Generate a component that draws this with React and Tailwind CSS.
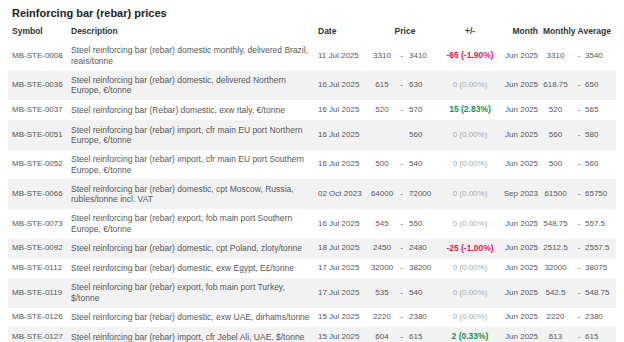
import React from 'react';

const rows = [
  { sym: 'MB-STE-0008', desc: ['Steel reinforcing bar (rebar) domestic monthly, delivered Brazil,', 'reais/tonne'], date: '11 Jul 2025', lo: '3310', hi: '3410', chg: '-65 (-1.90%)', dir: 'down', month: 'Jun 2025', alo: '3310', ahi: '3540' },
  { sym: 'MB-STE-0036', desc: ['Steel reinforcing bar (rebar) domestic, delivered Northern', 'Europe, €/tonne'], date: '16 Jul 2025', lo: '615', hi: '630', chg: '0 (0.00%)', month: 'Jun 2025', alo: '618.75', ahi: '650' },
  { sym: 'MB-STE-0037', desc: ['Steel reinforcing bar (Rebar) domestic, exw Italy, €/tonne'], date: '16 Jul 2025', lo: '520', hi: '570', chg: '15 (2.83%)', dir: 'up', month: 'Jun 2025', alo: '520', ahi: '565' },
  { sym: 'MB-STE-0051', desc: ['Steel reinforcing bar (rebar) import, cfr main EU port Northern', 'Europe, €/tonne'], date: '16 Jul 2025', lo: '', hi: '560', chg: '0 (0.00%)', month: 'Jun 2025', alo: '560', ahi: '580' },
  { sym: 'MB-STE-0052', desc: ['Steel reinforcing bar (rebar) import, cfr main EU port Southern', 'Europe, €/tonne'], date: '16 Jul 2025', lo: '500', hi: '540', chg: '0 (0.00%)', month: 'Jun 2025', alo: '500', ahi: '560' },
  { sym: 'MB-STE-0066', desc: ['Steel reinforcing bar (rebar) domestic, cpt Moscow, Russia,', 'rubles/tonne incl. VAT'], date: '02 Oct 2023', lo: '64000', hi: '72000', chg: '0 (0.00%)', month: 'Sep 2023', alo: '61500', ahi: '65750' },
  { sym: 'MB-STE-0073', desc: ['Steel reinforcing bar (rebar) export, fob main port Southern', 'Europe, €/tonne'], date: '16 Jul 2025', lo: '545', hi: '550', chg: '0 (0.00%)', month: 'Jun 2025', alo: '548.75', ahi: '557.5' },
  { sym: 'MB-STE-0092', desc: ['Steel reinforcing bar (rebar) domestic, cpt Poland, zloty/tonne'], date: '18 Jul 2025', lo: '2450', hi: '2480', chg: '-25 (-1.00%)', dir: 'down', month: 'Jun 2025', alo: '2512.5', ahi: '2557.5' },
  { sym: 'MB-STE-0112', desc: ['Steel reinforcing bar (rebar) domestic, exw Egypt, E£/tonne'], date: '17 Jul 2025', lo: '32000', hi: '38200', chg: '0 (0.00%)', month: 'Jun 2025', alo: '32000', ahi: '38075' },
  { sym: 'MB-STE-0119', desc: ['Steel reinforcing bar (rebar) export, fob main port Turkey,', '$/tonne'], date: '17 Jul 2025', lo: '535', hi: '540', chg: '0 (0.00%)', month: 'Jun 2025', alo: '542.5', ahi: '548.75' },
  { sym: 'MB-STE-0126', desc: ['Steel reinforcing bar (rebar) domestic, exw UAE, dirhams/tonne'], date: '15 Jul 2025', lo: '2220', hi: '2380', chg: '0 (0.00%)', month: 'Jun 2025', alo: '2220', ahi: '2380' },
  { sym: 'MB-STE-0127', desc: ['Steel reinforcing bar (rebar) import, cfr Jebel Ali, UAE, $/tonne'], date: '15 Jul 2025', lo: '604', hi: '615', chg: '2 (0.33%)', dir: 'up', month: 'Jun 2025', alo: '613', ahi: '615' },
];

function Change({ value, dir }) {
  if (dir === 'down') return <span className="font-bold text-[#e5174a] text-[8.5px]">{value}</span>;
  if (dir === 'up') return <span className="font-bold text-[#13905a] text-[8.5px]">{value}</span>;
  return <span className="text-[#ababab]">{value}</span>;
}

function Row({ r, striped }) {
  return (
    <div className={`flex items-center py-[4.3px] min-h-[19.3px] leading-[10.5px] text-[8px] text-[#575757] ${striped ? 'bg-[#f2f2f2]' : ''}`}>
      <div className="w-[63px] pl-[4px] whitespace-nowrap">{r.sym}</div>
      <div className="w-[247px] text-[8.5px]">
        {r.desc.map((line) => (
          <div key={line} className="whitespace-nowrap">{line}</div>
        ))}
      </div>
      <div className="w-[52px] whitespace-nowrap">{r.date}</div>
      <div className="w-[24px] text-center">{r.lo}</div>
      <div className="w-[15px] text-center">{r.lo ? '-' : ''}</div>
      <div className="w-[31px]">{r.hi}</div>
      <div className="w-[60px] text-center whitespace-nowrap">
        <Change value={r.chg} dir={r.dir} />
      </div>
      <div className="w-[38px] text-right whitespace-nowrap">{r.month}</div>
      <div className="w-[35px] text-center">{r.alo}</div>
      <div className="w-[12px] text-center">-</div>
      <div className="w-[30px]">{r.ahi}</div>
    </div>
  );
}

export default function App() {
  return (
    <div className="w-[624px] h-[342px] overflow-hidden bg-white font-['Liberation_Sans',Arial,sans-serif]">
      <h1 className="pt-[5px] px-[12px] text-[11px] leading-[16px] font-bold text-[#222]">Reinforcing bar (rebar) prices</h1>
      <div className="mx-[8px]">
        <div className="flex items-center h-[20px] text-[8.5px] font-bold text-[#333]">
          <div className="w-[63px] pl-[4px]">Symbol</div>
          <div className="w-[247px]">Description</div>
          <div className="w-[52px]">Date</div>
          <div className="w-[70px] text-center">Price</div>
          <div className="w-[60px] text-center">+/-</div>
          <div className="w-[38px] text-right">Month</div>
          <div className="pl-[5px] whitespace-nowrap">Monthly Average</div>
        </div>
        {rows.map((r, i) => (
          <Row key={r.sym} r={r} striped={i % 2 === 1} />
        ))}
      </div>
    </div>
  );
}
